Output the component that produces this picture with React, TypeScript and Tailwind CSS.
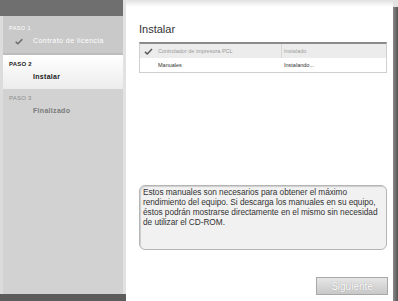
import React from "react";

function Check({ className = "" }: { className?: string }) {
  return (
    <svg viewBox="0 0 12 10" className={className}>
      <path d="M1 5.5 L4.2 8.5 L11 1.5" fill="none" stroke="currentColor" strokeWidth="2.2" strokeLinejoin="round" />
    </svg>
  );
}

export default function App() {
  return (
    <div className="w-[398px] h-[301px] flex bg-white overflow-hidden font-['Liberation_Sans',Arial,sans-serif]">
      {/* Sidebar */}
      <div className="w-[126px] shrink-0 h-full flex flex-col bg-[#d2d2d2] border-l-[3px] border-[#dcdcdc] border-r-[3px] border-r-[#e2e2e2]">
        <div className="h-[16px] bg-[#6f6f6f] -ml-[3px]" />
        <div className="h-[37px] bg-[#c9c9c9] pt-[8px] pl-[6px]">
          <div className="text-[5.5px] text-white tracking-[0.4px] leading-[8px]">PASO 1</div>
          <div className="flex items-center mt-[4px] pl-[6px]">
            <Check className="w-[8px] h-[7px] text-[#6a6a6a]" />
            <span className="ml-[10px] text-[7px] text-white tracking-[0.45px]">Contrato de licencia</span>
          </div>
        </div>
        <div className="h-[2px] bg-[#bdbdbd]" />
        <div className="h-[34px] bg-gradient-to-b from-white to-[#ececec] pt-[5px] pl-[6px]">
          <div className="text-[6px] text-[#222] font-bold tracking-[0.2px] leading-[8px]">PASO 2</div>
          <div className="text-[7px] text-[#222] font-bold tracking-[0.3px] mt-[4px] pl-[24px]">Instalar</div>
        </div>
        <div className="flex-1 pt-[5px] pl-[6px]">
          <div className="text-[6px] text-[#8a8a8a] tracking-[0.2px] leading-[8px]">PASO 3</div>
          <div className="text-[7px] text-[#7a7a7a] font-bold tracking-[0.3px] mt-[4px] pl-[24px]">Finalizado</div>
        </div>
        <div className="h-[7px] bg-[#5c5c5c] -ml-[3px] -mr-[3px]" />
      </div>

      {/* Main */}
      <div className="flex-1 min-w-0 h-full flex">
        <div className="flex-1 min-w-0 flex flex-col">
          <div className="h-[7px] bg-gradient-to-b from-[#e2e2e2] to-white" />
          <div className="pl-[13px] pr-[6px] flex flex-col flex-1">
            <h1 className="text-[11px] text-[#333] mt-[15px] leading-[14px]">Instalar</h1>
            <div className="mt-[6px] border border-[#cfcfcf] border-t-[2px] border-t-[#8a8a8a] text-[5.5px]">
              <div className="flex h-[14px] items-center bg-[#ececec]">
                <div className="w-[142px] flex items-center border-r border-[#d6d6d6] h-full">
                  <Check className="w-[9px] h-[7px] ml-[4px] mr-[5px] text-[#5a5a5a]" />
                  <span className="text-[#9a9a9a]">Controlador de impresora PCL</span>
                </div>
                <span className="pl-[2px] text-[#a0a0a0]">Instalado</span>
              </div>
              <div className="flex h-[14px] items-center bg-white">
                <div className="w-[142px] pl-[18px] text-[#333]">Manuales</div>
                <span className="pl-[2px] text-[#333]">Instalando...</span>
              </div>
            </div>
            <div className="mt-[112px] h-[65px] rounded-[6px] border border-[#b5b5b5] bg-[#f1f1f1] px-[3px] pt-[1px] text-[8.3px] tracking-[-0.05px] leading-[10px] text-[#333] whitespace-nowrap overflow-hidden shadow-[inset_1px_1px_1px_rgba(0,0,0,0.15)]">
              Estos manuales son necesarios para obtener el máximo<br />
              rendimiento del equipo. Si descarga los manuales en su equipo,<br />
              éstos podrán mostrarse directamente en el mismo sin necesidad<br />
              de utilizar el CD-ROM.
            </div>
            <div className="flex justify-end mt-[27px] mr-[-1px]">
              <div className="w-[72px] h-[18px] border border-[#a8a8a8] bg-gradient-to-b from-[#e6e6e6] to-[#c8c8c8] text-[10px] text-white flex items-center justify-center [text-shadow:0_0_1px_#888]">
                Siguiente
              </div>
            </div>
          </div>
        </div>
        <div className="w-[5px] shrink-0 h-full flex flex-col">
          <div className="h-[7px] bg-[#e2e2e2]" />
          <div className="flex-1 bg-gradient-to-r from-[#8a8a8a] to-[#555]" />
        </div>
      </div>
    </div>
  );
}
